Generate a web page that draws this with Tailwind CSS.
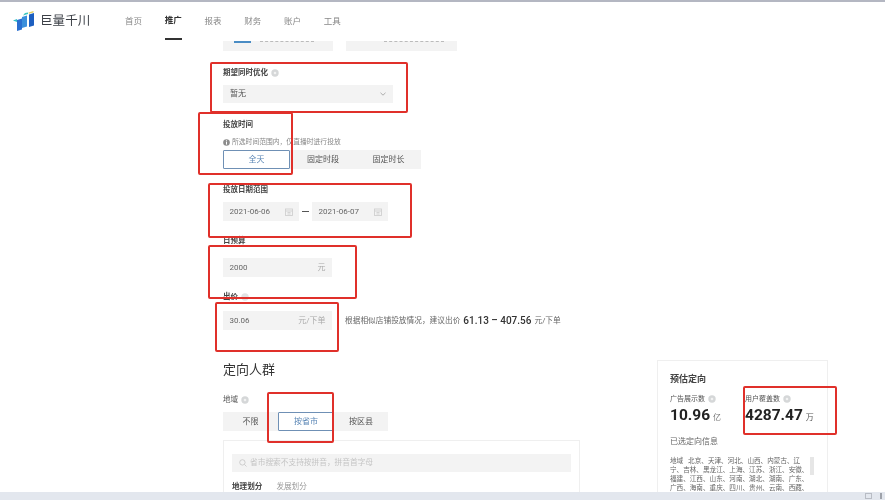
<!DOCTYPE html>
<html lang="zh-CN">
<head>
<meta charset="utf-8">
<script src="https://cdn.jsdelivr.net/npm/@tailwindcss/browser@4"></script>
</head>
<body class="m-0 bg-white">
<div class="relative w-[885px] h-[500px] overflow-hidden bg-white flex flex-col text-[#444] font-['Roboto','Noto_Sans_CJK_SC',sans-serif] blur-[0.35px]">
  <!-- top bar -->
  <header class="h-[41px] shrink-0 border-t-2 border-[#b4b7c2] flex items-start">
    <div class="w-[125px] h-[38px] flex items-center pl-[13px] gap-[5px]">
      <svg width="22" height="20" viewBox="0 0 22 20" class="shrink-0">
        <path d="M0 9.5 L4 8 L4 11 Z" fill="#35c0c8"/>
        <path d="M4 9 L9 7.5 V18.5 L4 20 Z" fill="#2a6fd0"/>
        <path d="M9 6 L14 4.5 V15.5 L9 17 Z" fill="#3a8fdc"/>
        <path d="M16 3.5 L21 2 V14.5 L16 16 Z" fill="#1d5fc0"/>
        <path d="M10 4.5 L15 3 L15 1.5 L12 2 Z" fill="#3dc6c0"/>
        <path d="M15.5 1.5 L20.5 0 L20.5 1.5 L16 2.8 Z" fill="#e3cf63"/>
      </svg>
      <span class="text-[12.5px] leading-none text-[#3b3f46] tracking-[0.1px] whitespace-nowrap">巨量千川</span>
    </div>
    <nav class="flex gap-[22.75px] text-[8.5px] text-[#888]">
      <a class="w-[17px] h-[38px] flex items-center whitespace-nowrap">首页</a>
      <a class="w-[17px] h-[38px] flex items-center whitespace-nowrap font-bold text-[#333] border-b-2 border-[#333]">推广</a>
      <a class="w-[17px] h-[38px] flex items-center whitespace-nowrap">报表</a>
      <a class="w-[17px] h-[38px] flex items-center whitespace-nowrap">财务</a>
      <a class="w-[17px] h-[38px] flex items-center whitespace-nowrap">账户</a>
      <a class="w-[17px] h-[38px] flex items-center whitespace-nowrap">工具</a>
    </nav>
  </header>

  <!-- content -->
  <div class="flex-1 min-h-0 overflow-hidden flex items-start">
    <main class="w-[657px] shrink-0 pl-[223px]">
      <div class="flex gap-[13px] h-[10px]">
        <div class="w-[110px] h-full bg-[#f3f3f3] flex items-start pl-[11px] gap-[9px]"><span class="w-[17px] h-[2px] bg-[#4a8cc4]"></span><span class="w-[54px] h-[1px] border-t border-dashed border-[#bbb]"></span></div>
        <div class="w-[111px] h-full bg-[#f3f3f3] flex items-start pl-[38px]"><span class="w-[60px] h-[1px] border-t border-dashed border-[#bbb]"></span></div>
      </div>

      <div class="mt-[16px] h-[12px] flex items-center gap-[3px] text-[7.5px] font-bold text-[#444]">期望同时优化
        <svg width="8" height="8" viewBox="0 0 8 8"><circle cx="4" cy="4" r="3.7" fill="#d5d7d8"/><circle cx="4" cy="4" r="1.3" fill="#f2f2f2"/></svg>
      </div>
      <div class="mt-[6px] w-[170px] h-[18px] bg-[#f3f3f3] flex items-center justify-between px-[7px] text-[8px] text-[#555]">暂无
        <svg width="6" height="4" viewBox="0 0 6 4" fill="none" stroke="#999" stroke-width="0.8"><path d="M0.5 0.8 L3 3.2 L5.5 0.8"/></svg>
      </div>

      <div class="mt-[16px] h-[12px] flex items-center text-[7.5px] font-bold text-[#444]">投放时间</div>
      <div class="mt-[5px] h-[12px] flex items-center gap-[2px] text-[6.8px] text-[#888] whitespace-nowrap">
        <svg width="7" height="7" viewBox="0 0 7 7"><circle cx="3.5" cy="3.5" r="3.3" fill="#8c8c8c"/><rect x="3" y="2.8" width="1" height="2.8" fill="#fff"/><rect x="3" y="1.3" width="1" height="1" fill="#fff"/></svg>
        所选时间范围内&#xFF0C;仅直播时进行投放
      </div>
      <div class="mt-[2px] w-[198px] h-[19px] bg-[#f3f3f3] flex text-[8px] text-[#555]">
        <div class="w-[67px] h-full bg-white border border-[#6f90b5] rounded-[1px] flex items-center justify-center text-[#5a86b5]">全天</div>
        <div class="w-[66px] h-full flex items-center justify-center">固定时段</div>
        <div class="w-[65px] h-full flex items-center justify-center">固定时长</div>
      </div>

      <div class="mt-[15px] h-[12px] flex items-center text-[7.5px] font-bold text-[#444]">投放日期范围</div>
      <div class="mt-[6px] h-[19px] flex items-center text-[8px] text-[#666]">
        <div class="w-[76px] h-full bg-[#f3f3f3] flex items-center justify-between pl-[6.5px] pr-[6px]">2021-06-06
          <svg width="8" height="8" viewBox="0 0 8 8" fill="none" stroke="#d0d0d0" stroke-width="0.9"><rect x="0.5" y="1" width="7" height="6.5"/><path d="M0.5 3 H7.5 M2.5 4.5 H5.5 M2.5 6 H5.5"/></svg>
        </div>
        <div class="w-[13px] flex justify-center"><span class="w-[7px] h-[1px] bg-[#555]"></span></div>
        <div class="w-[76px] h-full bg-[#f3f3f3] flex items-center justify-between pl-[6.5px] pr-[6px]">2021-06-07
          <svg width="8" height="8" viewBox="0 0 8 8" fill="none" stroke="#d0d0d0" stroke-width="0.9"><rect x="0.5" y="1" width="7" height="6.5"/><path d="M0.5 3 H7.5 M2.5 4.5 H5.5 M2.5 6 H5.5"/></svg>
        </div>
      </div>

      <div class="mt-[14px] h-[12px] flex items-center text-[7.5px] font-bold text-[#444]">日预算</div>
      <div class="mt-[11px] w-[109px] h-[19px] bg-[#f3f3f3] flex items-center justify-between px-[6.5px] text-[8px] text-[#666]">2000<span class="text-[#aaa]">元</span></div>

      <div class="mt-[14px] h-[12px] flex items-center gap-[3px] text-[7.5px] font-bold text-[#444]">出价
        <svg width="8" height="8" viewBox="0 0 8 8"><circle cx="4" cy="4" r="3.7" fill="#e2e3e4"/></svg>
      </div>
      <div class="mt-[8px] h-[19px] flex items-center">
        <div class="w-[109px] h-full bg-[#f3f3f3] flex items-center justify-between px-[6.5px] text-[8px] text-[#666]">30.06<span class="text-[#aaa]">元/下单</span></div>
        <div class="ml-[13px] flex items-center gap-[3px] text-[7.7px] text-[#666] whitespace-nowrap">根据相似店铺投放情况&#xFF0C;建议出价
          <span class="text-[10px] font-medium text-[#333]">61.13 – 407.56</span>
          <span>元/下单</span>
        </div>
      </div>

      <h2 class="mt-[30px] h-[20px] flex items-center text-[13px] font-normal text-[#333]">定向人群</h2>
      <div class="mt-[14px] h-[12px] flex items-center gap-[3px] text-[7.5px] text-[#555]">地域
        <svg width="8" height="8" viewBox="0 0 8 8"><circle cx="4" cy="4" r="3.7" fill="#d5d7d8"/><circle cx="4" cy="4" r="1.3" fill="#f2f2f2"/></svg>
      </div>
      <div class="mt-[6px] w-[165px] h-[19px] bg-[#f3f3f3] flex text-[8px] text-[#555]">
        <div class="w-[55px] h-full flex items-center justify-center">不限</div>
        <div class="w-[56px] h-full bg-white border border-[#6f90b5] rounded-[1px] flex items-center justify-center text-[#5a86b5]">按省市</div>
        <div class="w-[54px] h-full flex items-center justify-center">按区县</div>
      </div>

      <section class="mt-[9px] w-[357px] h-[100px] border border-[#efefef] px-[8px] pt-[13px]">
        <div class="h-[18px] bg-[#f3f3f3] flex items-center gap-[3px] px-[7px] text-[7.7px] text-[#c4c4c4]">
          <svg width="8" height="8" viewBox="0 0 8 8" fill="none" stroke="#c4c4c4" stroke-width="0.8"><circle cx="3.4" cy="3.4" r="2.7"/><path d="M5.4 5.4 L7.5 7.5"/></svg>
          省市搜索不支持按拼音&#xFF0C;拼音首字母
        </div>
        <div class="mt-[9px] h-[12px] flex items-center gap-[14px] text-[7.6px]">
          <span class="font-bold text-[#444]">地理划分</span><span class="text-[#999]">发展划分</span>
        </div>
      </section>
    </main>

    <aside class="mt-[319px] w-[171px] h-[160px] shrink-0 border border-[#efefef] pl-[12px] pt-[13px] relative">
      <div class="h-[12px] flex items-center text-[9px] font-bold text-[#444]">预估定向</div>
      <div class="mt-[7px] flex">
        <div class="w-[75px]">
          <div class="h-[12px] flex items-center gap-[3px] text-[7px] text-[#555] whitespace-nowrap">广告展示数
            <svg width="8" height="8" viewBox="0 0 8 8"><circle cx="4" cy="4" r="3.7" fill="#d5d7d8"/><circle cx="4" cy="4" r="1.3" fill="#f2f2f2"/></svg>
          </div>
          <div class="mt-[2px] h-[18px] flex items-center gap-[3px] whitespace-nowrap"><span class="text-[15.5px] font-bold text-[#222]">10.96</span><span class="text-[8px] text-[#777] mt-[3px]">亿</span></div>
        </div>
        <div>
          <div class="h-[12px] flex items-center gap-[3px] text-[7px] text-[#555] whitespace-nowrap">用户覆盖数
            <svg width="8" height="8" viewBox="0 0 8 8"><circle cx="4" cy="4" r="3.7" fill="#d5d7d8"/><circle cx="4" cy="4" r="1.3" fill="#f2f2f2"/></svg>
          </div>
          <div class="mt-[2px] h-[18px] flex items-center gap-[3px] whitespace-nowrap"><span class="text-[15.5px] font-bold text-[#222]">4287.47</span><span class="text-[8px] text-[#555] mt-[3px]">万</span></div>
        </div>
      </div>
      <div class="mt-[11px] h-[12px] flex items-center text-[8px] text-[#666]">已选定向信息</div>
      <div class="mt-[9px] flex">
        <p class="w-[136px] text-[6.6px] leading-[9px] text-[#666] whitespace-nowrap">地域&nbsp;&nbsp;&nbsp;北京、天津、河北、山西、内蒙古、辽<br>宁、吉林、黑龙江、上海、江苏、浙江、安徽、<br>福建、江西、山东、河南、湖北、湖南、广东、<br>广西、海南、重庆、四川、贵州、云南、西藏、</p>
        <span class="ml-[4px] w-[4px] h-[18px] bg-[#e6e6e6]"></span>
      </div>
    </aside>
  </div>

  <!-- bottom strip -->
  <footer class="h-[8px] shrink-0 bg-[#e3e7ee] flex items-center justify-end gap-[8px] pr-[3px]">
    <span class="w-[7px] h-[6px] border border-[#b8bcc4]"></span>
    <span class="w-[2px] h-[6px] bg-[#9ea2aa]"></span>
  </footer>

  <!-- red annotations -->
  <div class="absolute left-[210px] top-[62px] w-[198px] h-[51px] border-2 border-[#e0302a] rounded-[2px]"></div>
  <div class="absolute left-[198px] top-[112px] w-[95px] h-[63px] border-2 border-[#e0302a] rounded-[2px]"></div>
  <div class="absolute left-[208px] top-[183px] w-[204px] h-[55px] border-2 border-[#e0302a] rounded-[2px]"></div>
  <div class="absolute left-[208px] top-[245px] w-[149px] h-[54px] border-2 border-[#e0302a] rounded-[2px]"></div>
  <div class="absolute left-[215px] top-[302px] w-[124px] h-[50px] border-2 border-[#e0302a] rounded-[2px]"></div>
  <div class="absolute left-[267px] top-[392px] w-[67px] h-[51px] border-2 border-[#e0302a] rounded-[2px]"></div>
  <div class="absolute left-[743px] top-[386px] w-[94px] h-[49px] border-2 border-[#e0302a] rounded-[2px]"></div>
</div>
</body>
</html>
